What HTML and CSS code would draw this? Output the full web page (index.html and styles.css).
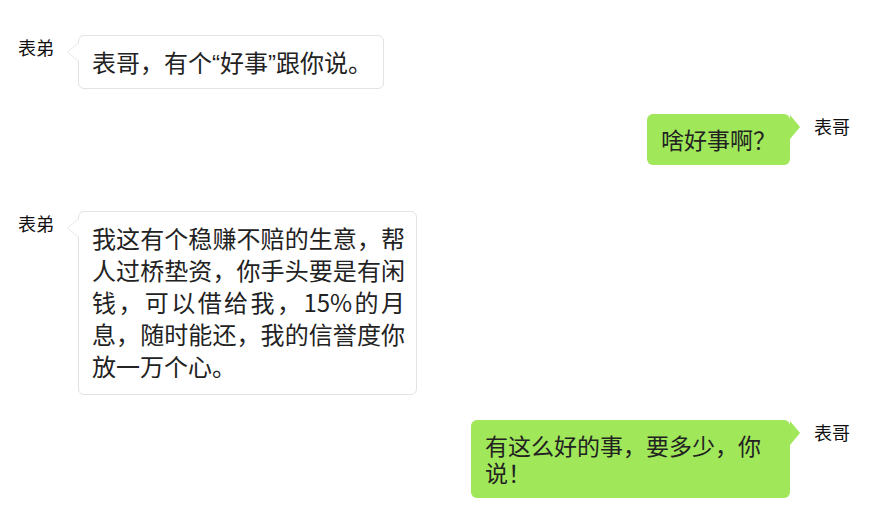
FILE: index.html
```html
<!DOCTYPE html>
<html lang="zh-CN">
<head>
    <meta charset="UTF-8">
    <meta name="viewport" content="width=device-width, initial-scale=1.0">
    <title>聊天记录</title>
    <link rel="stylesheet" href="styles.css">
</head>
<body>

    <div class="chat">
        <div class="msg left">
            <div class="name">表弟</div>
            <div class="bubble">表哥，有个<span class="q">“</span>好事<span class="q">”</span>跟你说。</div>
        </div>

        <div class="msg right">
            <div class="name">表哥</div>
            <div class="bubble">啥好事啊？</div>
        </div>

        <div class="msg left far">
            <div class="name">表弟</div>
            <div class="bubble">我这有个稳赚不赔的生意，帮人过桥垫资，你手头要是有闲钱，可以借给我，15%的月息，随时能还，我的信誉度你放一万个心。</div>
        </div>

        <div class="msg right">
            <div class="name">表哥</div>
            <div class="bubble">有这么好的事，要多少，你说！</div>
        </div>
    </div>

</body>
</html>
```

FILE: styles.css
```css
body {
    margin: 0;
    background-color: #fff;
    color: #222;
    font-family: "Noto Sans CJK SC", "Noto Sans", sans-serif;
}
.chat {
    display: flex;
    flex-direction: column;
    padding: 35px 38px 0 18px;
}
.msg {
    display: flex;
    align-items: flex-start;
    gap: 24px;
    margin-top: 25px;
}
.msg:first-child {
    margin-top: 0;
}
.msg.far {
    margin-top: 46px;
}
.msg.right {
    flex-direction: row-reverse;
}
.name {
    font-size: 18px;
    line-height: 24px;
    color: #111;
    white-space: nowrap;
}
.bubble {
    position: relative;
    box-sizing: border-box;
    border-radius: 6px;
}
.q {
    font-family: "Liberation Sans", sans-serif;
    line-height: 1;
}
.left .bubble {
    max-width: 339px;
    padding: 10px 11px 10px 13px;
    background-color: #fff;
    border: 1px solid #e3e3e3;
    font-size: 24px;
    line-height: 32px;
    text-align: justify;
}
.left.far .bubble {
    padding-bottom: 12px;
}
.left .bubble::before,
.left .bubble::after {
    content: '';
    position: absolute;
    top: 7px;
    border-style: solid;
    border-color: transparent;
    border-width: 9px 11px 9px 0;
}
.left .bubble::before {
    left: -12px;
    border-right-color: #e3e3e3;
}
.left .bubble::after {
    left: -11px;
    border-right-color: #fff;
}
.right .bubble {
    max-width: 319px;
    padding: 12px 14px;
    background-color: #a0e75a;
    font-size: 23px;
    line-height: 27px;
}
.right .bubble::after {
    content: '';
    position: absolute;
    right: -10px;
    top: 1px;
    border-style: solid;
    border-color: transparent;
    border-width: 12px 0 12px 10px;
    border-left-color: #a0e75a;
}
```
